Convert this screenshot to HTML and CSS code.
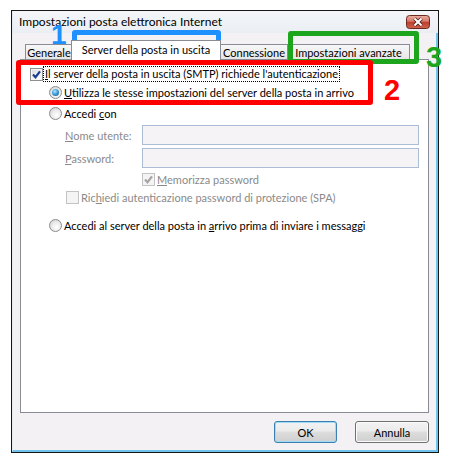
FILE: index.html
```html
<!DOCTYPE html>
<html lang="it">
<head>
<meta charset="utf-8">
<title>Impostazioni posta elettronica Internet</title>
<link rel="stylesheet" href="styles.css">
</head>
<body>
<div class="stage">
  <div class="window">
    <div class="titlebar">
      <span class="title">Impostazioni posta elettronica Internet</span>
      <span class="close">
        <svg width="24" height="14" viewBox="0 0 24 14">
          <defs>
            <linearGradient id="cg" x1="0" y1="0" x2="0" y2="1">
              <stop offset="0" stop-color="#eab0a3"/>
              <stop offset="0.45" stop-color="#d7786a"/>
              <stop offset="0.5" stop-color="#bd3d2c"/>
              <stop offset="1" stop-color="#cf6450"/>
            </linearGradient>
          </defs>
          <rect x="0.5" y="0.5" width="23" height="13" rx="3" fill="url(#cg)" stroke="#6b2a20"/>
          <path d="M8.5 3.5 L15.5 10.5 M15.5 3.5 L8.5 10.5" stroke="#4a1a12" stroke-width="3.6" fill="none"/>
          <path d="M8.5 3.5 L15.5 10.5 M15.5 3.5 L8.5 10.5" stroke="#ffffff" stroke-width="2" fill="none"/>
        </svg>
      </span>
    </div>
    <div class="client">
      <div class="tabs">
        <div class="tab t-gen">Generale</div>
        <div class="tab sel">Server della posta in uscita</div>
        <div class="tab t-con">Connessione</div>
        <div class="tab t-adv">Impostazioni avanzate</div>
      </div>
      <div class="panel">
        <div class="row r1">
          <span class="cb"><svg viewBox="0 0 11 11" width="11" height="11"><path d="M2 5.5 L4.5 8.2 L9 2.3" fill="none" stroke="#1c3d96" stroke-width="2.2"/></svg></span>
          <span class="focus"><u>I</u>l server della posta in uscita (SMTP) richiede l'autenticazione</span>
        </div>
        <div class="row r2">
          <span class="rb on"></span>
          <span class="lbl"><u>U</u>tilizza le stesse impostazioni del server della posta in arrivo</span>
        </div>
        <div class="row r3">
          <span class="rb"></span>
          <span class="lbl">Accedi <u>c</u>on</span>
        </div>
        <div class="field f1">
          <span class="flabel dis"><u>N</u>ome utente:</span>
          <span class="input"></span>
        </div>
        <div class="field f2">
          <span class="flabel dis"><u>P</u>assword:</span>
          <span class="input"></span>
        </div>
        <div class="row r4">
          <span class="cb disabled"><svg viewBox="0 0 11 11" width="11" height="11"><path d="M2 5.5 L4.5 8.2 L9 2.3" fill="none" stroke="#a6a6a6" stroke-width="2.2"/></svg></span>
          <span class="lbl dis"><u>M</u>emorizza password</span>
        </div>
        <div class="row r5">
          <span class="cb disabled"></span>
          <span class="lbl dis">Ric<u>h</u>iedi autenticazione password di protezione (SPA)</span>
        </div>
        <div class="row r6">
          <span class="rb"></span>
          <span class="lbl">Accedi al server della posta in <u>a</u>rrivo prima di inviare i messaggi</span>
        </div>
      </div>
      <div class="buttons">
        <button class="btn ok">OK</button>
        <button class="btn cancel">Annulla</button>
      </div>
    </div>
  </div>

  <div class="mark box-blue"></div>
  <div class="mark box-green"></div>
  <div class="mark box-red"></div>
  <span class="num n1">1</span>
  <span class="num n2">2</span>
  <span class="num n3">3</span>
</div>
</body>
</html>
```

FILE: styles.css
```css
* { box-sizing: border-box; }

html, body {
  margin: 0;
  padding: 0;
  background: #ffffff;
}

body {
  font-family: Lato, "Liberation Sans", sans-serif;
  font-size: 11px;
  color: #000;
}

.stage {
  position: relative;
  width: 451px;
  height: 464px;
  padding: 10px 0 0 11px;
  overflow: hidden;
}

.window {
  width: 428px;
  height: 443px;
  border: 1px solid #161616;
  display: flex;
  flex-direction: column;
  background: #eef1f5;
}

.titlebar {
  height: 22px;
  display: flex;
  justify-content: space-between;
  align-items: flex-start;
  padding: 0 8px 0 6px;
  background: linear-gradient(#f4f6f9, #eaeef3);
  border-left: 1px solid #e3e8ef;
}

.title {
  line-height: 22px;
  font-size: 12px;
}

.close {
  margin-top: 4px;
  width: 24px;
  height: 14px;
  display: block;
}
.close svg { display: block; }

.client {
  flex: 1;
  background: #f4f1f4;
  border-left: 1px solid #e6e9ee;
  border-right: 2px solid #6fc3ec;
  border-bottom: 2px solid #6fc3ec;
  padding: 7px 7px 0 7px;
  display: flex;
  flex-direction: column;
}

/* tabs */
.tabs {
  height: 20px;
  display: flex;
  align-items: flex-end;
  padding-left: 5px;
}

.tab {
  height: 15px;
  margin-bottom: 1px;
  border: 1px solid #898c95;
  border-bottom: none;
  background: linear-gradient(#f7f7f7, #e6e6e6);
  display: flex;
  align-items: center;
  justify-content: center;
  line-height: 13px;
  white-space: nowrap;
}

.t-gen { width: 48px; }
.sel {
  width: 150px;
  height: 20px;
  margin: 0 0 0 -2px;
  background: #ffffff;
  position: relative;
  z-index: 2;
  padding-bottom: 2px;
}
.t-con { width: 68px; margin-left: -1px; }
.t-adv { width: 123px; margin-left: -1px; }

.panel {
  margin-top: -1px;
  height: 354px;
  background: #ffffff;
  border: 1px solid #898c95;
  padding: 5px 0 0 9px;
  display: flex;
  flex-direction: column;
}

.row {
  height: 18px;
  display: flex;
  align-items: center;
  white-space: nowrap;
}

.lbl { margin-left: 2px; }
.dis { color: #8a8a8a; }

.r2 { padding-left: 19px; }
.r3 { padding-left: 19px; margin-top: 3px; }
.r4 { padding-left: 112px; margin-top: 2px; }
.r5 { padding-left: 36px; }
.r6 { padding-left: 19px; margin-top: 10px; }

.focus {
  border: 1px dotted #000;
  padding: 0 1px;
  line-height: 14px;
}

.field {
  height: 20px;
  display: flex;
  align-items: center;
  margin-top: 3px;
  padding-left: 35px;
}

.flabel {
  width: 77px;
  flex: none;
}

.input {
  width: 277px;
  height: 20px;
  border: 1px solid #abbdd4;
  background: #f6f3f6;
}

/* checkbox */
.cb {
  flex: none;
  width: 13px;
  height: 13px;
  border: 1px solid #8e8f8f;
  background: linear-gradient(135deg, #d9d9d9 0%, #f1f1f1 55%, #ffffff 100%);
  box-shadow: inset 0 0 0 1px #f6f6f6;
  display: flex;
  align-items: center;
  justify-content: center;
}
.cb svg { display: block; }
.cb.disabled {
  border-color: #c3c3c3;
  background: #f4f4f4;
  box-shadow: none;
}

/* radio */
.rb {
  flex: none;
  width: 13px;
  height: 13px;
  border-radius: 50%;
  border: 1px solid #8a8b8c;
  background: radial-gradient(circle at 60% 65%, #ffffff 0%, #ececec 45%, #cdcdcd 100%);
  display: flex;
  align-items: center;
  justify-content: center;
}
.rb.on::after {
  content: "";
  width: 7px;
  height: 7px;
  border-radius: 50%;
  background: radial-gradient(circle at 40% 35%, #b5e8ff 0%, #3f9fdc 45%, #19497d 100%);
}

/* buttons */
.buttons {
  display: flex;
  justify-content: flex-end;
  margin-top: 8px;
  gap: 18px;
}

.btn {
  height: 22px;
  font-family: inherit;
  font-size: 11px;
  color: #000;
  border: 1px solid #707070;
  border-radius: 3px;
  background: linear-gradient(#f3f3f3 0%, #ebebeb 45%, #dddddd 50%, #cfcfcf 100%);
  box-shadow: inset 0 0 0 1px #fbfbfb;
  padding: 0;
}
.ok {
  width: 63px;
  border-color: #3c7fb1;
  box-shadow: inset 0 0 0 1px #9fdaf7;
}
.cancel { width: 74px; }

/* annotations */
.mark {
  position: absolute;
  border-radius: 3px;
}
.box-blue {
  left: 72px;
  top: 30px;
  width: 149px;
  height: 33px;
  border: 5px solid #1e90ff;
}
.box-red {
  left: 16px;
  top: 60px;
  width: 357px;
  height: 45px;
  border: 5px solid #ff0000;
}
.box-green {
  left: 288px;
  top: 31px;
  width: 131px;
  height: 33px;
  border: 5px solid #1ea51e;
}

.num {
  position: absolute;
  font-family: "Liberation Sans", Arial, sans-serif;
  font-weight: bold;
  line-height: 1;
}
.n1 { left: 51px; top: 21px; font-size: 28px; color: #1e90ff; }
.n2 { left: 384px; top: 76px; font-size: 29px; color: #ff0000; }
.n3 { left: 426px; top: 43px; font-size: 29px; color: #1ea51e; }
```
